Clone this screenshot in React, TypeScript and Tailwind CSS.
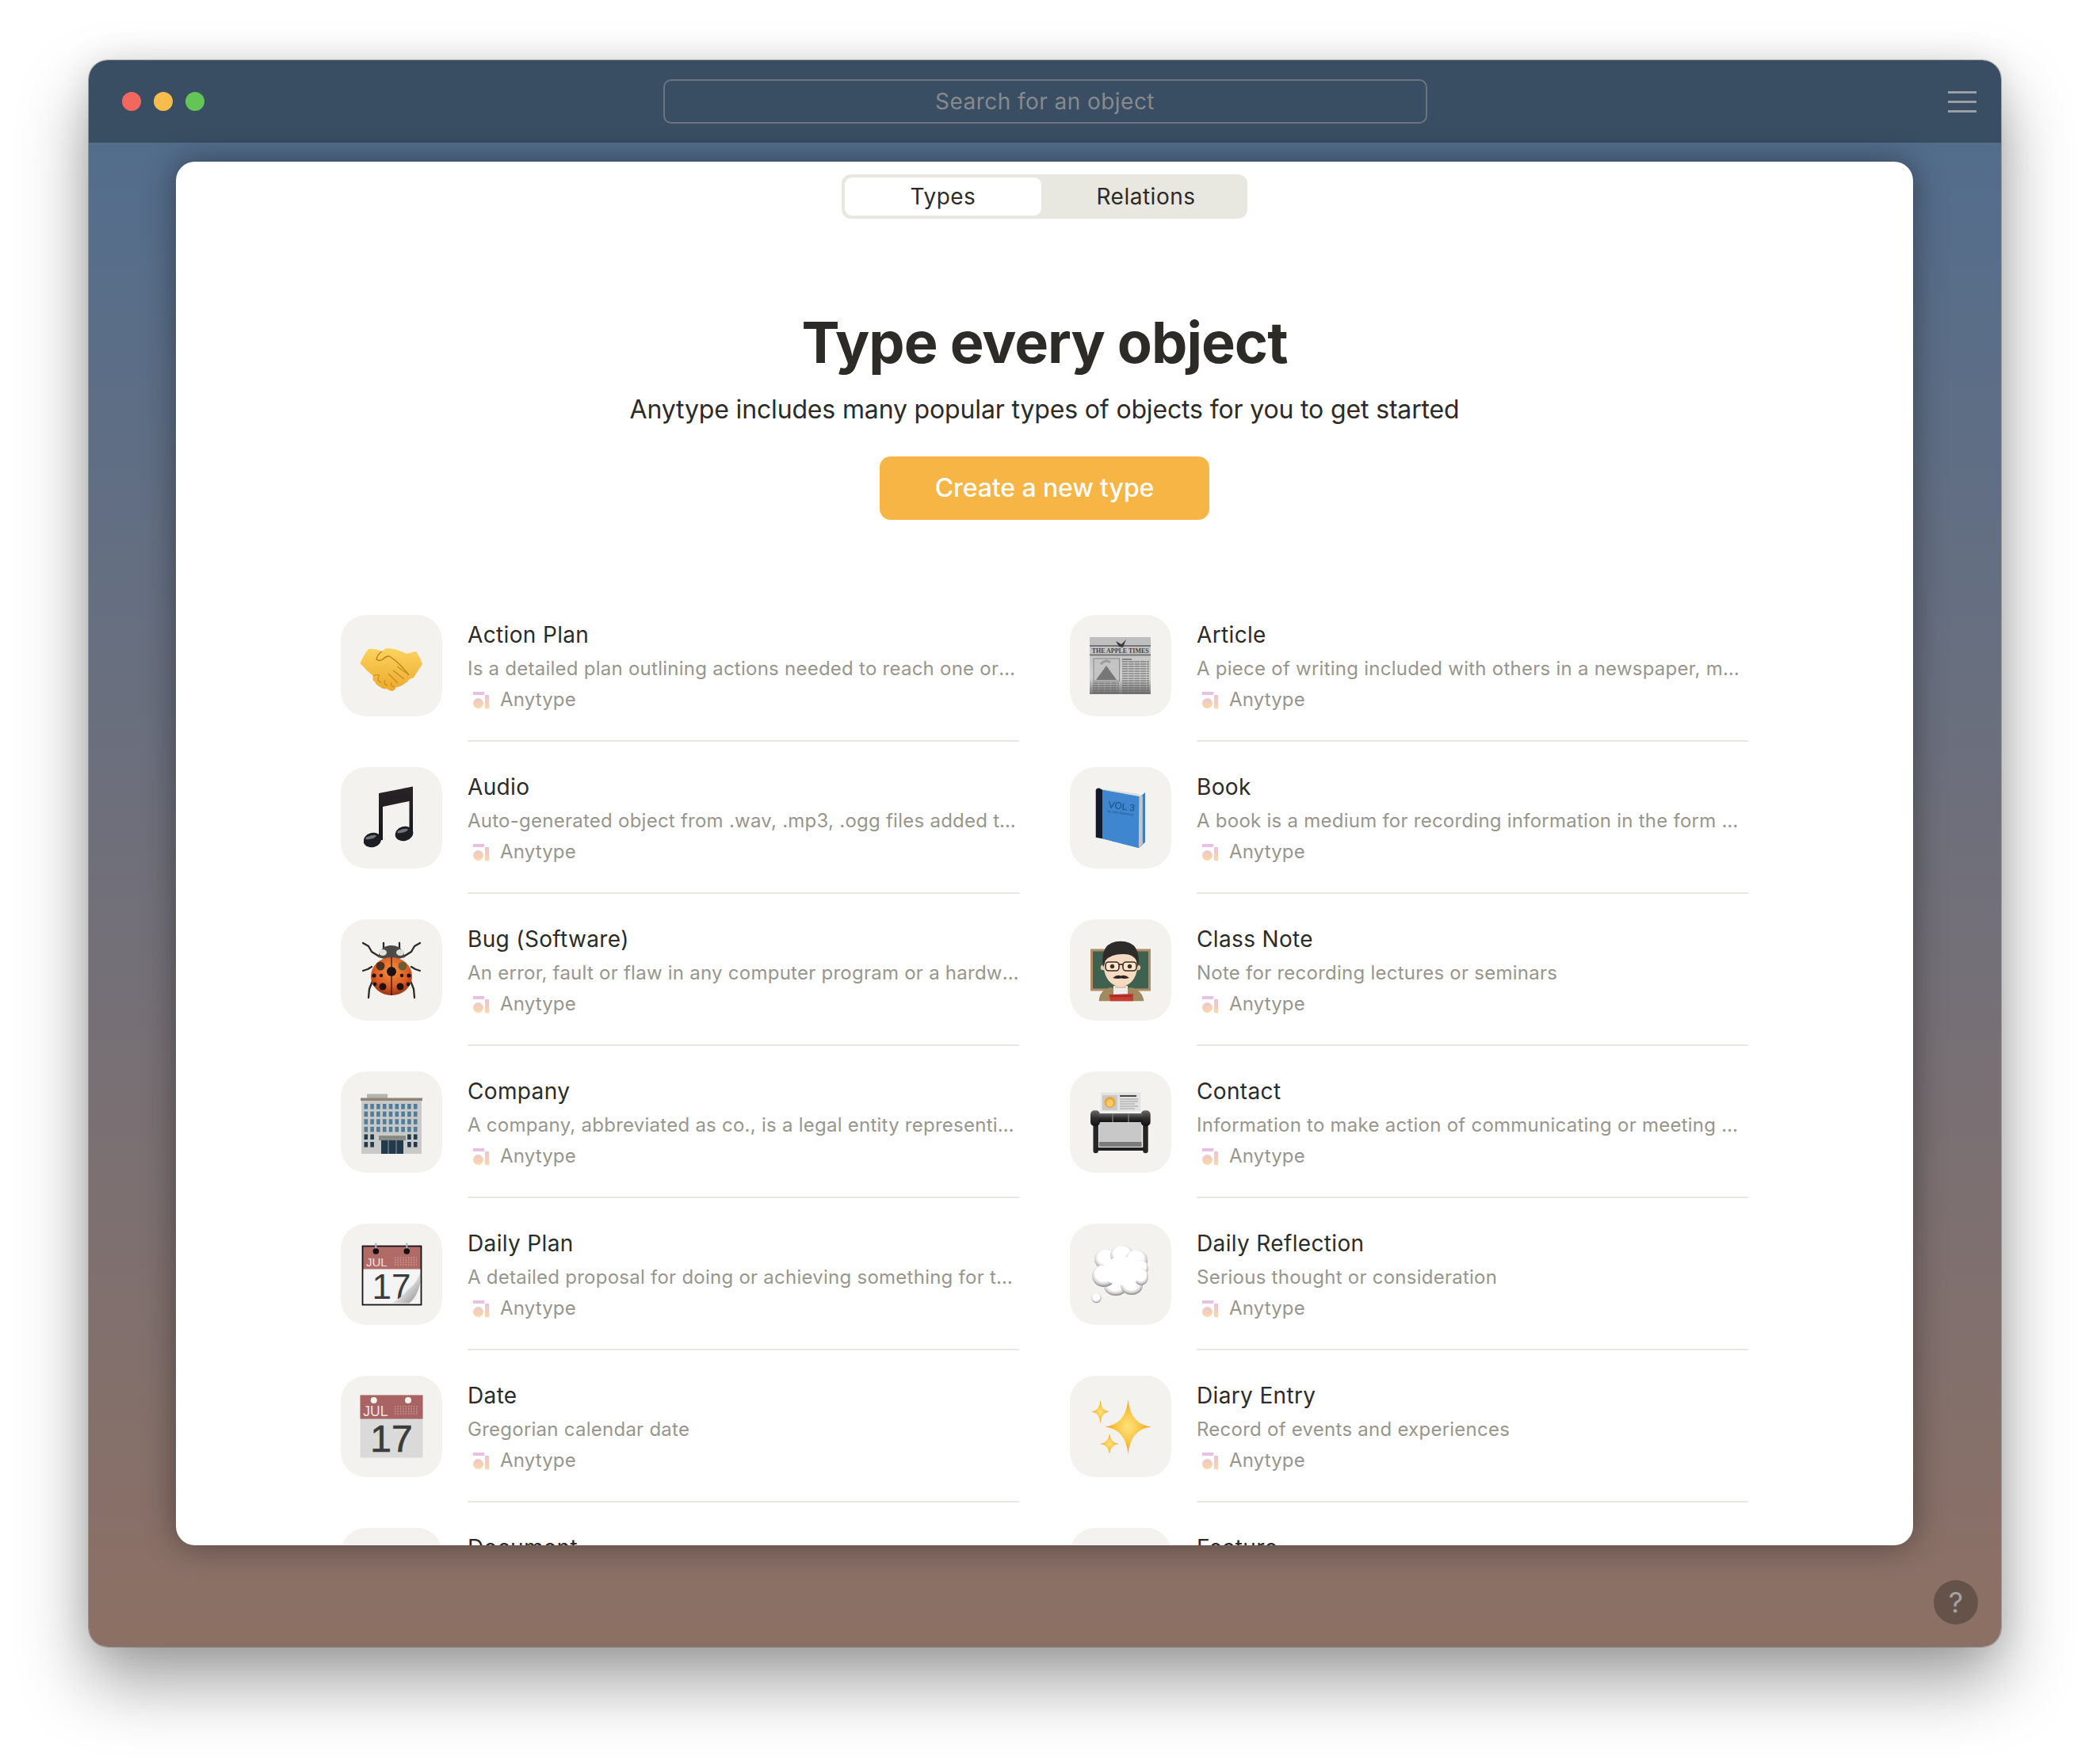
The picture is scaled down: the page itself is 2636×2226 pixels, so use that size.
import React from "react"

const font = { fontFamily: "Inter, 'Liberation Sans', sans-serif" }

type Star = { cx: number; cy: number; rx: number; ry: number }

const starPath = ({ cx, cy, rx, ry }: Star) => {
  const kx = rx * 0.1
  const ky = ry * 0.1
  return `M${cx} ${cy - ry}Q${cx + kx} ${cy - ky} ${cx + rx} ${cy}Q${cx + kx} ${cy + ky} ${cx} ${cy + ry}Q${cx - kx} ${cy + ky} ${cx - rx} ${cy}Q${cx - kx} ${cy - ky} ${cx} ${cy - ry}Z`
}

const Handshake = () => (
  <svg viewBox="0 0 80 80" className="w-[80px] h-[80px]">
    <defs>
      <linearGradient id="hs" x1="0" y1="0" x2="0" y2="1">
        <stop offset="0" stopColor="#fcd45e" />
        <stop offset="1" stopColor="#eca92c" />
      </linearGradient>
    </defs>
    <path d="M0.5 37Q5 26 11 19Q20 18 28 22Q31 18 36 18Q48 19 59 25L71 22Q76 29 79 38Q73 47 68 55L63 57Q60 61 56 63Q51 67 46 67Q44 72 40 72Q36 71 34 69Q29 70 26 67Q20 64 19 60Q15 59 17 53Q8 46 0.5 37Z" fill="url(#hs)" />
    <path d="M28 22Q22 26 21 32Q24 35 29 32Q33 28 37 28Q50 36 62 52" fill="none" stroke="#b97c18" strokeWidth="1.3" />
    <path d="M47 41L60 50M42 46L56 57M36 50L48 62M17 53Q22 50 25 53M24 54Q21 59 27 61M32 58Q29 63 35 65M40 61Q38 66 44 67" fill="none" stroke="#c4861f" strokeWidth="1.1" />
  </svg>
)

const Notes = () => (
  <svg viewBox="0 0 80 80" className="w-[80px] h-[80px]">
    <defs>
      <linearGradient id="nt" x1="0" y1="0" x2="0" y2="1">
        <stop offset="0" stopColor="#2a2327" />
        <stop offset="1" stopColor="#14171c" />
      </linearGradient>
    </defs>
    <path d="M24 9L67 0.5V61H62.5V19L29 26V68H24Z" fill="url(#nt)" />
    <ellipse cx="16" cy="68" rx="11.5" ry="9" transform="rotate(-16 16 68)" fill="#1b1e23" />
    <ellipse cx="56" cy="60" rx="11.5" ry="9" transform="rotate(-16 56 60)" fill="#1b1e23" />
    <ellipse cx="14" cy="64.5" rx="7" ry="2.2" transform="rotate(-16 14 64.5)" fill="#727579" />
    <ellipse cx="54" cy="56.5" rx="7" ry="2.2" transform="rotate(-16 54 56.5)" fill="#727579" />
  </svg>
)

const Ladybug = () => (
  <svg viewBox="0 0 80 80" className="w-[80px] h-[80px]">
    <defs>
      <radialGradient id="lb" cx="0.5" cy="0.35" r="0.7">
        <stop offset="0" stopColor="#f0933d" />
        <stop offset="0.6" stopColor="#dd5a22" />
        <stop offset="1" stopColor="#8c2b12" />
      </radialGradient>
    </defs>
    <path d="M4 6L11 10L15 17L23 22M76 6L69 10L65 17L57 22M4 41L10 39L15 36M76 41L70 39L65 36M11 75L12 64L16 54M69 75L68 64L64 54M30 12L30 6M50 12L50 6" fill="none" stroke="#2c2a28" strokeWidth="2.3" strokeLinecap="round" strokeLinejoin="round" />
    <path d="M23 24Q26 9 40 9Q54 9 57 24Q40 30 23 24Z" fill="#4b4a48" />
    <ellipse cx="29" cy="18" rx="5" ry="4" fill="#dfdfdb" />
    <ellipse cx="51" cy="18" rx="5" ry="4" fill="#dfdfdb" />
    <ellipse cx="40" cy="48" rx="26" ry="24" fill="url(#lb)" />
    <path d="M40 24V72" stroke="#3a1a10" strokeWidth="1.4" />
    <g fill="#1d1210">
      <circle cx="40" cy="42" r="6" />
      <circle cx="26" cy="35" r="5.5" fill="#4b3323" />
      <circle cx="54" cy="35" r="5.5" fill="#6f5a36" />
      <circle cx="27" cy="47" r="2.2" />
      <circle cx="53" cy="47" r="2.2" />
      <circle cx="18" cy="47" r="2.6" />
      <circle cx="62" cy="47" r="2.6" />
      <circle cx="29" cy="61" r="4.5" />
      <circle cx="51" cy="61" r="4.5" />
      <circle cx="19" cy="58" r="2.4" />
      <circle cx="61" cy="58" r="2.4" />
    </g>
  </svg>
)

const Newspaper = () => (
  <svg viewBox="0 0 80 80" className="w-[80px] h-[80px]">
    <defs>
      <linearGradient id="np" x1="0" y1="0" x2="0" y2="1">
        <stop offset="0" stopColor="#bdbdbd" />
        <stop offset="0.72" stopColor="#d2d2d2" />
        <stop offset="1" stopColor="#757575" />
      </linearGradient>
    </defs>
    <rect x="1" y="4" width="77" height="72" fill="url(#np)" />
    <path d="M1 15H78M1 26.5H78" stroke="#777" strokeWidth="1.8" />
    <path d="M34 9L41 13L47 7L43 17L38 16Z" fill="#3c3c3c" />
    <text x="3.7" y="24" textLength="72" lengthAdjust="spacingAndGlyphs" fontFamily="'Liberation Serif', serif" fontWeight="700" fontSize="8.6" fill="#444">THE APPLE TIMES</text>
    <rect x="6" y="31" width="32.7" height="28.3" fill="#c4c4c4" stroke="#777" strokeWidth="0.8" />
    <path d="M9 58L22 40L35 58Z" fill="#777" />
    <path d="M15 38Q22 31 27 36" fill="none" stroke="#9a9a9a" strokeWidth="3" />
    <path d="M42 32H54" stroke="#555" strokeWidth="1.2" />
    <path d="M42 35H76M42 38H76M42 41H76M42 44H76M42 47H76M42 50H76M42 53H76M42 56H76M42 59H76M42 62H76M42 65H76M42 68H76M42 71H76M42 74H76M5 62H38M5 65H38M5 68H38M5 71H38M5 74H38" stroke="#5a5a5a" strokeWidth="1" strokeDasharray="7 0.7" />
  </svg>
)

const Book = () => (
  <svg viewBox="0 0 80 80" className="w-[80px] h-[80px]">
    <path d="M64 14L71 8V70.7L63 78Z" fill="#3b7fc4" />
    <path d="M12 3.5L17 4.7L63.3 13L67.7 12.3L67.7 73L62.7 78L17 66.3Z" fill="#9d9d9d" />
    <path d="M13 3L60 9.5L67.7 12.3L63.3 13L17 4.7Z" fill="#dcdcdc" />
    <path d="M63.3 13L67.7 12.3V73L62.7 78Z" fill="#c6c6c6" />
    <path d="M8.7 5Q9.5 2 13 2.5L17 4.7V66.3L8.7 64.7Z" fill="#15192a" />
    <path d="M17 4.7L63.3 13L62.7 78L17 66.3Z" fill="#3e86cf" />
    <text x="24" y="27" fontFamily="'Liberation Sans', sans-serif" fontSize="12" fill="#1d4f85" transform="rotate(8 24 27)">VOL 3</text>
    <text x="24" y="33" fontFamily="'Liberation Sans', sans-serif" fontSize="3.8" fill="#1d4f85" transform="rotate(8 24 33)">by John Appleseed</text>
  </svg>
)

const Teacher = () => (
  <svg viewBox="0 0 80 80" className="w-[80px] h-[80px]">
    <rect x="3.5" y="15" width="73" height="50" fill="#3f6250" stroke="#b48c63" strokeWidth="3" />
    <path d="M12.7 79.3Q13 66 27 62L40 65L53 62Q68 66 69.3 79.3Z" fill="#a18a5e" />
    <path d="M31 60H49V72H31Z" fill="#eeeeee" />
    <path d="M25.3 71L56 70V79.3H27Z" fill="#c63a30" />
    <path d="M27 73H54" stroke="#7c1f1a" strokeWidth="1" />
    <rect x="33" y="50" width="14" height="13" fill="#e7c4a6" />
    <circle cx="18" cy="37" r="3.2" fill="#ebc9ad" />
    <circle cx="62" cy="37" r="3.2" fill="#ebc9ad" />
    <ellipse cx="40" cy="36" rx="21" ry="25" fill="#f6dac1" />
    <path d="M18 37Q13 4 40 3.7Q67 4 62 37L60 28Q55 19 42 20Q28 20 21 28Z" fill="#2e2b2b" />
    <g fill="#fff" stroke="#3a2a1b" strokeWidth="1.6">
      <rect x="21" y="30" width="17" height="11" rx="4" fillOpacity="0.35" />
      <rect x="43" y="30" width="17" height="11" rx="4" fillOpacity="0.35" />
    </g>
    <path d="M38 33H43" stroke="#3a2a1b" strokeWidth="1.6" />
    <circle cx="29.5" cy="35.5" r="2.7" fill="#4a2f1a" />
    <circle cx="51.5" cy="35.5" r="2.7" fill="#4a2f1a" />
    <path d="M30 50Q36 45 40.5 47.5Q45 45 51 50Q45 51.5 40.5 50.5Q36 51.5 30 50Z" fill="#2b2624" />
  </svg>
)

const Building = () => {
  const cols = [0, 1, 2, 3, 4, 5, 6, 7, 8]
  const rows = [0, 1, 2, 3, 4, 5]
  return (
    <svg viewBox="0 0 80 80" className="w-[80px] h-[80px]">
      <rect x="9" y="4.5" width="26" height="6" fill="#b5b3ad" />
      <rect x="2" y="10" width="76" height="70" fill="#c9c9c7" />
      <rect x="1" y="9.5" width="78" height="3.5" fill="#8c8578" />
      {rows.map((r) =>
        cols.map((c) =>
          r > 3 && c > 1 && c < 7 ? null : (
            <rect key={`${r}-${c}`} x={5.5 + c * 7.8} y={17 + r * 9.6} width="4.6" height="6.6" fill={r > 3 ? "#1f3b4d" : "#4f7d9b"} />
          )
        )
      )}
      <rect x="24" y="57" width="34" height="6" fill="#8a8a85" />
      <rect x="27" y="63" width="28" height="17" fill="#1f3b4d" />
      <path d="M36 63V80M46 63V80" stroke="#71797d" strokeWidth="1.5" />
    </svg>
  )
}

const Scanner = () => (
  <svg viewBox="0 0 80 80" className="w-[80px] h-[80px]">
    <defs>
      <linearGradient id="sc" x1="0" y1="0" x2="0" y2="1">
        <stop offset="0" stopColor="#6a6a6a" />
        <stop offset="0.5" stopColor="#2f2f2f" />
        <stop offset="1" stopColor="#111111" />
      </linearGradient>
    </defs>
    <rect x="15.3" y="2.5" width="50" height="24" fill="#e3e3e3" />
    <rect x="17" y="6" width="19" height="19" fill="#c9c9c9" />
    <circle cx="26.5" cy="15" r="7" fill="#e9a73b" />
    <circle cx="26.5" cy="16" r="4.5" fill="#f5c96b" />
    <path d="M39 7H60" stroke="#222" strokeWidth="1.6" />
    <path d="M39 11H62M39 14H62M39 17H58M39 20H62M39 23H58" stroke="#9a9a9a" strokeWidth="1" />
    <rect x="12.7" y="39" width="54" height="26" fill="#c8c8c8" />
    <rect x="12.7" y="65" width="54" height="6" fill="#7b7b7b" />
    <path d="M8.7 44V76M71.5 44V76" stroke="#262626" strokeWidth="6.5" strokeLinecap="round" />
    <path d="M9 74H71" stroke="#202020" strokeWidth="4" />
    <rect x="2" y="25.3" width="12" height="19.7" rx="5" fill="url(#sc)" />
    <rect x="65.7" y="25.3" width="12" height="19.7" rx="5" fill="url(#sc)" />
    <rect x="12" y="29" width="56" height="11" fill="url(#sc)" />
    <path d="M30 29V40M50 29V40" stroke="#7a7a7a" strokeWidth="1.4" />
  </svg>
)

const Calendar = ({ curl }: { curl: boolean }) => (
  <svg viewBox="0 0 80 80" className="w-[80px] h-[80px]">
    <defs>
      <linearGradient id="cu" x1="0" y1="0" x2="1" y2="1">
        <stop offset="0" stopColor="#ffffff" />
        <stop offset="0.55" stopColor="#d6d6d6" />
        <stop offset="1" stopColor="#8a8a8a" />
      </linearGradient>
    </defs>
    {curl ? (
      <g>
        <rect x="3.5" y="4.5" width="74" height="74" fill="#f4f4f4" />
        <rect x="3.5" y="4.5" width="74" height="29" fill="#b26a67" />
        <text x="8" y="29.8" fontFamily="'Liberation Sans', sans-serif" fontSize="15" fill="#f5e3e3">JUL</text>
        <path d="M44 19H72M44 22H72M44 25H72M44 28H72" stroke="#dcb8b6" strokeWidth="1.2" strokeDasharray="1.4 2" />
        <text x="40" y="70.5" textAnchor="middle" fontFamily="'Liberation Sans', sans-serif" fontSize="44" fill="#3c3c3c">17</text>
        <path d="M76.5 37Q72 52 60 60Q52 70 41 76.5H62Q72 70 76.5 50Z" fill="url(#cu)" />
        <rect x="3.5" y="4.5" width="74" height="74" fill="none" stroke="#151515" strokeWidth="1.8" />
        <rect x="19.3" y="0.5" width="2" height="10" fill="#a9b4c0" />
        <rect x="58.3" y="0.5" width="2" height="10" fill="#a9b4c0" />
        <circle cx="20.3" cy="11" r="3.8" fill="#111" />
        <circle cx="59.3" cy="11" r="3.8" fill="#111" />
      </g>
    ) : (
      <g>
        <rect x="0.5" y="0.5" width="79" height="79" fill="#dadada" />
        <rect x="0.5" y="0.5" width="79" height="30" fill="#a96362" />
        <circle cx="17.7" cy="7" r="4" fill="#f4f2ee" />
        <circle cx="61" cy="7" r="4" fill="#f4f2ee" />
        <text x="4.3" y="26.8" fontFamily="'Liberation Sans', sans-serif" fontSize="17.5" fill="#f5e3e3">JUL</text>
        <path d="M44 15H74M44 18H74M44 21H74M44 24H74" stroke="#dcb8b6" strokeWidth="1.2" strokeDasharray="1.4 2" />
        <text x="40" y="71.5" textAnchor="middle" fontFamily="'Liberation Sans', sans-serif" fontSize="48" fill="#3c3c3c" stroke="#3c3c3c" strokeWidth="0.7">17</text>
      </g>
    )}
  </svg>
)

const Cloud = () => (
  <svg viewBox="0 0 80 80" className="w-[80px] h-[80px]">
    <defs>
      <radialGradient id="cl" cx="0.48" cy="0.4" r="0.58">
        <stop offset="0" stopColor="#ffffff" />
        <stop offset="0.58" stopColor="#ffffff" />
        <stop offset="0.82" stopColor="#d2d2d2" />
        <stop offset="1" stopColor="#8f8f8f" />
      </radialGradient>
    </defs>
    <g fill="url(#cl)">
      <ellipse cx="34" cy="55" rx="15" ry="12" />
      <ellipse cx="54" cy="54" rx="14" ry="12" />
      <ellipse cx="22" cy="21" rx="15" ry="13" />
      <ellipse cx="42" cy="16" rx="15" ry="12.5" />
      <ellipse cx="60" cy="22" rx="14" ry="13" />
      <ellipse cx="66" cy="32" rx="9" ry="10" />
      <ellipse cx="66" cy="43" rx="9" ry="11" />
      <ellipse cx="19" cy="42" rx="15" ry="14" />
    </g>
    <ellipse cx="42" cy="36" rx="25" ry="18" fill="#ffffff" />
    <circle cx="9.5" cy="70" r="6.2" fill="url(#cl)" />
  </svg>
)

const Sparkles = () => (
  <svg viewBox="0 0 80 80" className="w-[80px] h-[80px]">
    <defs>
      <radialGradient id="sp" cx="0.5" cy="0.5" r="0.5">
        <stop offset="0" stopColor="#fde37c" />
        <stop offset="0.55" stopColor="#f8c544" />
        <stop offset="1" stopColor="#ee9a2a" />
      </radialGradient>
    </defs>
    <path d={starPath({ cx: 49.5, cy: 40.5, rx: 29, ry: 34.5 })} fill="url(#sp)" />
    <path d={starPath({ cx: 14.5, cy: 21.5, rx: 11, ry: 15 })} fill="url(#sp)" />
    <path d={starPath({ cx: 26, cy: 62, rx: 12, ry: 13 })} fill="url(#sp)" />
  </svg>
)

const AnytypeMark = () => (
  <svg viewBox="0 0 21 21" className="w-[21px] h-[21px] shrink-0">
    <defs>
      <linearGradient id="am" gradientUnits="userSpaceOnUse" x1="0" y1="0" x2="0" y2="21">
        <stop offset="0" stopColor="#e5bfe6" />
        <stop offset="1" stopColor="#fbd7a4" />
      </linearGradient>
    </defs>
    <rect x="1" y="0" width="14" height="4" fill="url(#am)" />
    <circle cx="7.5" cy="14.5" r="6.5" fill="url(#am)" />
    <rect x="16" y="4" width="5" height="17" fill="url(#am)" />
  </svg>
)

type Item = { title: string; desc: string; icon?: React.ReactNode }

const items: Item[] = [
  { title: "Action Plan", desc: "Is a detailed plan outlining actions needed to reach one or more goals", icon: <Handshake /> },
  { title: "Article", desc: "A piece of writing included with others in a newspaper, magazine or other publication", icon: <Newspaper /> },
  { title: "Audio", desc: "Auto-generated object from .wav, .mp3, .ogg files added to Anytype", icon: <Notes /> },
  { title: "Book", desc: "A book is a medium for recording information in the form of writing or images", icon: <Book /> },
  { title: "Bug (Software)", desc: "An error, fault or flaw in any computer program or a hardware system", icon: <Ladybug /> },
  { title: "Class Note", desc: "Note for recording lectures or seminars", icon: <Teacher /> },
  { title: "Company", desc: "A company, abbreviated as co., is a legal entity representing an association", icon: <Building /> },
  { title: "Contact", desc: "Information to make action of communicating or meeting with a person", icon: <Scanner /> },
  { title: "Daily Plan", desc: "A detailed proposal for doing or achieving something for the day", icon: <Calendar curl /> },
  { title: "Daily Reflection", desc: "Serious thought or consideration", icon: <Cloud /> },
  { title: "Date", desc: "Gregorian calendar date", icon: <Calendar curl={false} /> },
  { title: "Diary Entry", desc: "Record of events and experiences", icon: <Sparkles /> },
  { title: "Document", desc: "A piece of matter that provides information" },
  { title: "Feature", desc: "A distinguishing characteristic of a product" },
]

const Row = ({ item }: { item: Item }) => (
  <div className="flex gap-[32px] pb-[32px] min-w-0">
    <div className="w-[128px] h-[128px] shrink-0 rounded-[32px] bg-[#f3f2ee] flex items-center justify-center">{item.icon}</div>
    <div className="flex-1 min-w-0 h-[160px] border-b-2 border-[#e9e8e2] pt-[9px]">
      <div className="text-[28px] leading-[32px] tracking-[0.35px] text-[#2c2b27]">{item.title}</div>
      <div className="mt-[9px] text-[24px] leading-[36px] tracking-[0.25px] text-[#98968c] truncate">{item.desc}</div>
      <div className="mt-[3px] flex items-center gap-[14px] pl-[6px] text-[24px] leading-[36px] tracking-[0.15px] text-[#98968c]">
        <AnytypeMark />
        <span>Anytype</span>
      </div>
    </div>
  </div>
)

export default function App() {
  return (
    <div className="w-[2636px] h-[2226px] bg-white pl-[112px] pt-[76px] overflow-hidden" style={font}>
      <div className="w-[2413px] h-[2002px] rounded-[24px] overflow-visible flex flex-col shadow-[0_0_0_1px_rgba(0,0,0,0.25),0_44px_88px_rgba(0,0,0,0.38),0_0_40px_rgba(0,0,0,0.1)]">
        <div className="h-[104px] shrink-0 rounded-t-[24px] bg-[#394d63] flex items-center justify-between pl-[42px] pr-[31px]">
          <div className="w-[400px] flex gap-[16px]">
            <div className="w-[24px] h-[24px] rounded-full bg-[#f2685f]"></div>
            <div className="w-[24px] h-[24px] rounded-full bg-[#f6bd4c]"></div>
            <div className="w-[24px] h-[24px] rounded-full bg-[#62c554]"></div>
          </div>
          <div className="w-[964px] h-[56px] rounded-[10px] border-2 border-[#6b747f] flex items-center justify-center text-[28px] tracking-[0.45px] text-[#868a8e]">
            Search for an object
          </div>
          <div className="w-[411px] flex justify-end">
            <div className="w-[36px] flex flex-col gap-[9px]">
              <div className="h-[3px] bg-[#9b9ea2]"></div>
              <div className="h-[3px] bg-[#9b9ea2]"></div>
              <div className="h-[3px] bg-[#9b9ea2]"></div>
            </div>
          </div>
        </div>
        <div className="relative flex-1 rounded-b-[24px] bg-gradient-to-b from-[#526d8c] to-[#8d7064] px-[110px] pt-[24px]">
          <div className="relative w-[2192px] h-[1746px] rounded-[24px] bg-white overflow-hidden shadow-[0_0_40px_rgba(0,0,0,0.4)]">
            <div className="flex justify-center pt-[16px]">
              <div className="w-[512px] h-[56px] rounded-[12px] bg-[#e8e7e0] p-[4px] flex text-[28px] tracking-[0.5px] text-[#2c2b27]">
                <div className="w-[248px] rounded-[9px] bg-white flex items-center justify-center">Types</div>
                <div className="flex-1 flex items-center justify-center pl-[8px]">Relations</div>
              </div>
            </div>
            <h1 className="mt-[111px] text-center text-[72px] leading-[90px] tracking-[-1px] font-bold text-[#2c2b27]">Type every object</h1>
            <p className="mt-[18px] text-center text-[32px] leading-[44px] tracking-[-0.15px] text-[#2c2b27]">Anytype includes many popular types of objects for you to get started</p>
            <div className="mt-[37px] flex justify-center">
              <div className="w-[416px] h-[80px] rounded-[14px] bg-[#f6b545] flex items-center justify-center text-[32px] tracking-[-0.1px] font-medium text-white">Create a new type</div>
            </div>
            <div className="mt-[120px] mx-[208px] grid grid-cols-2 gap-x-[64px]">
              {items.map((item) => (
                <Row key={item.title} item={item} />
              ))}
            </div>
          </div>
          <div className="absolute right-[29px] bottom-[28px] w-[56px] h-[56px] rounded-full bg-[#655249] flex items-center justify-center text-[36px] text-[#a3a3a3]">?</div>
        </div>
      </div>
    </div>
  )
}
